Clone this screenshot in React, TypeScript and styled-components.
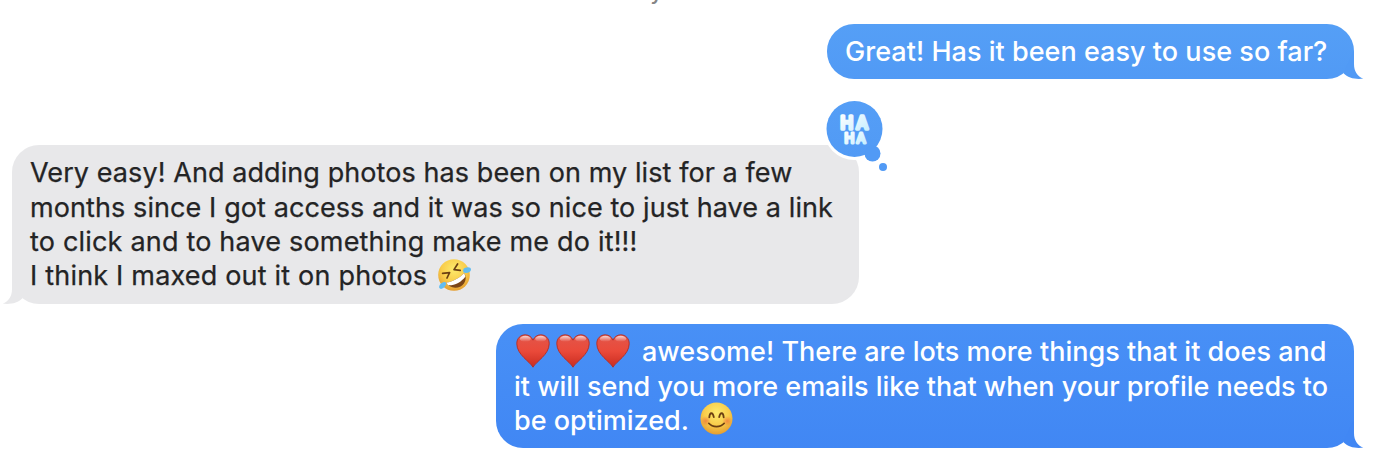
import type { ReactNode } from 'react';
import styled, { createGlobalStyle } from 'styled-components';

const GlobalStyle = createGlobalStyle`
  * {
    box-sizing: border-box;
  }

  body {
    margin: 0;
    background: #ffffff;
    overflow: hidden;
  }
`;

const Thread = styled.main`
  display: flex;
  flex-direction: column;
  height: 462px;
  padding: 0 20px 0 12px;
  overflow: hidden;
  font-family: Inter, 'Liberation Sans', sans-serif;
  font-size: 27px;
  line-height: 34.34px;
`;

const Timestamp = styled.div`
  height: 24px;
  margin: -21px 0 21px;
  text-align: center;
  font-size: 22px;
  font-weight: 500;
  line-height: 24px;
  color: #858585;
`;

type BubbleProps = {
  $sent?: boolean;
  $width: number;
  $height: number;
  $from: string;
  $to: string;
  $gap?: number;
};

const Bubble = styled.div<BubbleProps>`
  position: relative;
  flex: none;
  align-self: ${(p) => (p.$sent ? 'flex-end' : 'flex-start')};
  width: ${(p) => p.$width}px;
  height: ${(p) => p.$height}px;
  margin-top: ${(p) => p.$gap ?? 0}px;
  padding: 11.4px 18px 0;
  border-radius: 27px;
  background: linear-gradient(${(p) => p.$from}, ${(p) => p.$to});
  color: ${(p) => (p.$sent ? '#ffffff' : '#242425')};
  font-weight: ${(p) => (p.$sent ? 500 : 400)};
  -webkit-text-stroke: ${(p) => (p.$sent ? '0' : '0.25px #242425')};
`;

const Line = styled.div<{ $tracking?: number }>`
  display: flex;
  align-items: center;
  height: 34.34px;
  white-space: pre;
  letter-spacing: ${(p) => p.$tracking ?? 0}px;
`;

const TailShape = styled.svg<{ $sent?: boolean }>`
  position: absolute;
  bottom: 0;
  ${(p) => (p.$sent ? 'right: -10px;' : 'left: -10px; transform: scaleX(-1);')}
`;

const Emoji = styled.svg<{ $left?: number; $top?: number }>`
  flex: none;
  margin: ${(p) => p.$top ?? 0}px 0 0 ${(p) => p.$left ?? 0}px;
`;

const Hearts = styled.span`
  display: flex;
  gap: 6px;
  margin: -3px 12px 0 2px;
`;

const Reaction = styled.svg`
  position: absolute;
  top: -48px;
  right: -32px;
  -webkit-text-stroke: 0;
`;

function Tail({ sent, color }: { sent?: boolean; color: string }) {
  return (
    <TailShape $sent={sent} width="30" height="27" viewBox="0 0 30 27">
      <path fill={color} d="M19 0H20V12C20 19.5 23.5 24.5 29.3 26.6C21.5 27.6 14 26 9.5 21.2Z" />
    </TailShape>
  );
}

function Message({ children, ...rest }: BubbleProps & { children: ReactNode }) {
  return (
    <Bubble {...rest}>
      <Tail sent={rest.$sent} color={rest.$to} />
      {children}
    </Bubble>
  );
}

function Heart() {
  return (
    <Emoji width="34" height="34" viewBox="0 0 34 34" role="img" aria-label="red heart">
      <path
        fill="url(#heartFill)"
        stroke="#b52b20"
        strokeWidth="0.9"
        d="M17 33.2C14 27.5 1 21 .8 9.8C.7 4.5 4.5 .8 9.2 .8C12.7 .8 15.7 2.9 17 6.2C18.3 2.9 21.3 .8 24.8 .8C29.5 .8 33.3 4.5 33.2 9.8C33 21 20 27.5 17 33.2Z"
      />
      <ellipse cx="9.3" cy="4.8" rx="5.5" ry="3" fill="url(#heartShine)" />
      <ellipse cx="24.7" cy="4.8" rx="5.5" ry="3" fill="url(#heartShine)" />
    </Emoji>
  );
}

function Rofl() {
  return (
    <Emoji $left={10} $top={-4} width="34" height="34" viewBox="0 0 34 34" role="img" aria-label="rolling on the floor laughing">
      <circle cx="17" cy="17" r="15.8" fill="url(#faceFill)" />
      <path d="M5.6 15.4L12.6 14.6L10 20" fill="none" stroke="#6b3f12" strokeWidth="1.7" strokeLinecap="round" strokeLinejoin="round" />
      <path d="M20.6 6L17 11.6L23.2 12.4" fill="none" stroke="#6b3f12" strokeWidth="1.7" strokeLinecap="round" strokeLinejoin="round" />
      <path d="M9.3 24.6C15.5 23.8 23 20 27.2 15C30 19.5 28.8 25.6 23.6 28.4C18.2 31 11.6 29.4 9.3 24.6Z" fill="#7a4518" />
      <path d="M9.3 24.6C15.5 23.8 23 20 27.2 15L28.4 18.4C24.5 24 17.5 27.6 11 27.2Z" fill="#fff" />
      <path d="M27.2 10.3C30.5 8.5 34 9 34 11.5C33.9 14.2 30 15.6 26.6 14.5C25.7 13.2 26 11.2 27.2 10.3Z" fill="#63bdf0" />
      <path d="M7.8 24C5 24 1.8 26.6 2.1 29.6C3.2 32.2 7.2 30.8 9.2 26.3C9.2 25 8.8 24.3 7.8 24Z" fill="#63bdf0" />
    </Emoji>
  );
}

function Smile() {
  return (
    <Emoji $left={11} $top={-5} width="33" height="33" viewBox="0 0 33 33" role="img" aria-label="smiling face">
      <circle cx="16.5" cy="16.5" r="16" fill="url(#faceFill)" />
      <circle cx="5.8" cy="19" r="5" fill="url(#blush)" />
      <circle cx="27.2" cy="19" r="5" fill="url(#blush)" />
      <path d="M9.3 15.4C9.8 9.9 12.8 9.9 13.8 15.2M19.2 15.2C20.2 9.9 23.2 9.9 23.7 15.4" fill="none" stroke="#6b3f12" strokeWidth="1.8" strokeLinecap="round" />
      <path d="M8.8 21.3C12.5 25.8 20.5 25.8 24.2 21.3" fill="none" stroke="#6b3f12" strokeWidth="1.7" strokeLinecap="round" />
    </Emoji>
  );
}

function Haha() {
  return (
    <Reaction width="66" height="78" viewBox="0 0 66 78" role="img" aria-label="Haha">
      <circle cx="29.5" cy="32" r="31" fill="#fff" />
      <circle cx="29.5" cy="32" r="28" fill="url(#reactionFill)" />
      <circle cx="47.5" cy="56.5" r="8" fill="#519af5" />
      <circle cx="58" cy="70" r="4" fill="#519af5" />
      <g
        fill="url(#hahaFill)"
        stroke="url(#hahaFill)"
        strokeLinejoin="round"
        fontFamily="Inter, sans-serif"
        fontWeight="400"
      >
        <text x="15.4 31.2" y="32.4" fontSize="17" strokeWidth="3.5">HA</text>
        <text x="19.6 31.6" y="46" fontSize="13.2" strokeWidth="2.8">HA</text>
      </g>
    </Reaction>
  );
}

function Paints() {
  return (
    <svg width="0" height="0" style={{ position: 'absolute' }} aria-hidden="true">
      <defs>
        <linearGradient id="heartFill" x1="0" y1="0" x2="0" y2="1">
          <stop offset="0" stopColor="#e2564a" />
          <stop offset="0.5" stopColor="#ea4a3a" />
          <stop offset="1" stopColor="#c92c20" />
        </linearGradient>
        <linearGradient id="heartShine" x1="0" y1="0" x2="0" y2="1">
          <stop offset="0" stopColor="#fff" stopOpacity="0.75" />
          <stop offset="1" stopColor="#fff" stopOpacity="0" />
        </linearGradient>
        <radialGradient id="faceFill" cx="0.5" cy="0.32" r="0.7">
          <stop offset="0" stopColor="#fdea6c" />
          <stop offset="0.55" stopColor="#f9cd4b" />
          <stop offset="1" stopColor="#e39a2e" />
        </radialGradient>
        <radialGradient id="blush">
          <stop offset="0" stopColor="#ee6f3c" stopOpacity="0.7" />
          <stop offset="1" stopColor="#ee6f3c" stopOpacity="0" />
        </radialGradient>
        <linearGradient id="reactionFill" x1="0" y1="0" x2="0" y2="1">
          <stop offset="0" stopColor="#559ef6" />
          <stop offset="1" stopColor="#519af5" />
        </linearGradient>
        <linearGradient id="hahaFill" x1="0" y1="0" x2="1" y2="1">
          <stop offset="0" stopColor="#ffffff" />
          <stop offset="1" stopColor="#c3edff" />
        </linearGradient>
      </defs>
    </svg>
  );
}

export default function App() {
  return (
    <Thread>
      <GlobalStyle />
      <Paints />
      <Timestamp>Today 10:47 AM</Timestamp>

      <Message $sent $width={527} $height={55} $from="#559ff6" $to="#519af5">
        <Line $tracking={0.03}>Great! Has it been easy to use so far?</Line>
      </Message>

      <Message $width={847} $height={159} $gap={66} $from="#e8e8ea" $to="#e8e8ea">
        <Line $tracking={0.08}>Very easy! And adding photos has been on my list for a few</Line>
        <Line $tracking={0.09}>months since I got access and it was so nice to just have a link</Line>
        <Line $tracking={0.19}>to click and to have something make me do it!!!</Line>
        <Line $tracking={0.19}>I think I maxed out it on photos<Rofl /></Line>
        <Haha />
      </Message>

      <Message $sent $width={858} $height={124} $gap={20} $from="#4890f6" $to="#4187f4">
        <Line $tracking={0.02}>
          <Hearts>
            <Heart />
            <Heart />
            <Heart />
          </Hearts>
          awesome! There are lots more things that it does and
        </Line>
        <Line $tracking={-0.02}>it will send you more emails like that when your profile needs to</Line>
        <Line>be optimized.<Smile /></Line>
      </Message>
    </Thread>
  );
}
